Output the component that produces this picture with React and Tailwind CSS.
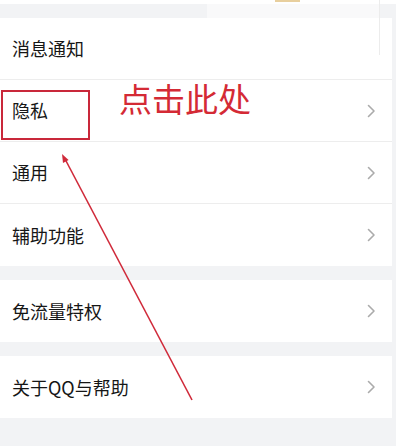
const groups = [
  ["消息通知", "隐私", "通用", "辅助功能"],
  ["免流量特权"],
  ["关于QQ与帮助"],
];

const Chevron = () => (
  <svg width="9" height="14" viewBox="0 0 9 14" fill="none">
    <polyline points="1.5,1.5 7,7 1.5,12.5" stroke="#ababab" strokeWidth="1.6" strokeLinejoin="round" strokeLinecap="round" />
  </svg>
);

const Row = ({ label, last, chevron }) => (
  <div
    className={`flex items-center justify-between h-[62px] pl-3 pr-4 ${last ? "" : "border-b border-[#ededed]"}`}
  >
    <span className="text-[18px] text-[#161616]">{label}</span>
    {chevron && <Chevron />}
  </div>
);

export default function App() {
  return (
    <div
      className="relative w-[396px] h-[446px] overflow-hidden bg-[#f2f3f5]"
      style={{ fontFamily: '"Noto Sans CJK SC", "Noto Sans", sans-serif' }}
    >
      <div className="h-[4px] bg-white" />
      <div className="flex flex-col gap-[14px] pt-[14px] pr-1">
        {groups.map((g, gi) => (
          <div key={gi} className="bg-white">
            {g.map((label, i) => (
              <Row key={label} label={label} last={i === g.length - 1} chevron={!(gi === 0 && i === 0)} />
            ))}
          </div>
        ))}
      </div>

      {/* faint overlay left over at top right */}
      <div className="absolute left-[207px] top-0 w-[173px] h-[28px] bg-white/50" />
      <div className="absolute left-[379px] top-0 w-px h-[55px] bg-[#ececec]" />
      <div className="absolute left-[275px] top-0 w-[25px] h-[2px] bg-[#e8cf9e]" />

      {/* annotation */}
      <div className="absolute left-[1px] top-[90px] w-[89px] h-[50px] border-2 border-[#c9283a]" />
      <div className="absolute left-[119px] top-[82px] text-[33px] leading-none text-[#d42a35]">点击此处</div>
      <svg className="absolute inset-0" width="396" height="446">
        <line x1="192" y1="400" x2="65" y2="159" stroke="#d02a3a" strokeWidth="1.6" />
        <polygon points="62,154 68.6,160 63,163" fill="#d02a3a" />
      </svg>
    </div>
  );
}
